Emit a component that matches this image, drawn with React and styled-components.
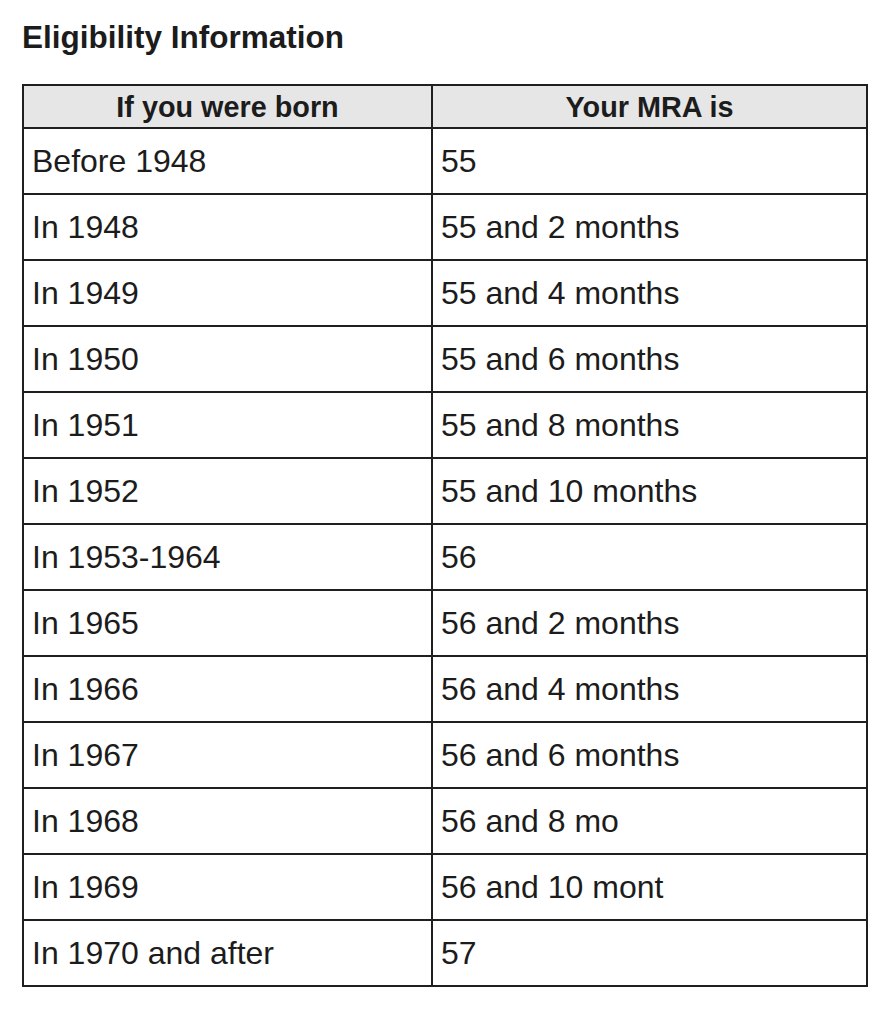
import React from "react";
import styled, { createGlobalStyle } from "styled-components";

const Global = createGlobalStyle`
  html, body { margin: 0; padding: 0; background: #ffffff; }
  body { font-family: "Liberation Sans", Arial, Helvetica, sans-serif; color: #1c1c1c; }
`;

const Page = styled.div`
  padding: 19px 0 0 22px;
`;

const Title = styled.h2`
  margin: 0 0 29px 0;
  font-size: 31.5px;
  line-height: 36px;
  font-weight: 700;
  color: #1c1c1c;
`;

const Table = styled.table`
  border-collapse: collapse;
  width: 844px;
  table-layout: fixed;
  border: 2px solid #1f1f1f;
`;

const Col = styled.col`
  width: ${(p) => p.$w}px;
`;

const HeadCell = styled.th`
  background: #e6e6e6;
  border: 2px solid #1f1f1f;
  height: 41px;
  padding: 0 8px;
  font-size: 28.8px;
  font-weight: 700;
  text-align: center;
  vertical-align: middle;
  line-height: 32px;
`;

const Cell = styled.td`
  border: 2px solid #1f1f1f;
  height: 64px;
  padding: 0 8px;
  font-size: 32px;
  line-height: 36px;
  vertical-align: middle;
  text-align: left;
`;

const rows = [
  ["Before 1948", "55"],
  ["In 1948", "55 and 2 months"],
  ["In 1949", "55 and 4 months"],
  ["In 1950", "55 and 6 months"],
  ["In 1951", "55 and 8 months"],
  ["In 1952", "55 and 10 months"],
  ["In 1953-1964", "56"],
  ["In 1965", "56 and 2 months"],
  ["In 1966", "56 and 4 months"],
  ["In 1967", "56 and 6 months"],
  ["In 1968", "56 and 8 mo"],
  ["In 1969", "56 and 10 mont"],
  ["In 1970 and after", "57"],
];

export default function App() {
  return (
    <>
      <Global />
      <Page>
        <Title>Eligibility Information</Title>
        <Table>
          <colgroup>
            <Col $w={409} />
            <Col $w={435} />
          </colgroup>
          <thead>
            <tr>
              <HeadCell>If you were born</HeadCell>
              <HeadCell>Your MRA is</HeadCell>
            </tr>
          </thead>
          <tbody>
            {rows.map(([a, b]) => (
              <tr key={a}>
                <Cell>{a}</Cell>
                <Cell>{b}</Cell>
              </tr>
            ))}
          </tbody>
        </Table>
      </Page>
    </>
  );
}
